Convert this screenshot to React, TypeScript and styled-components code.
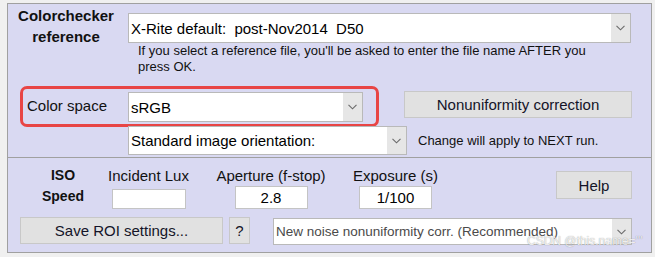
import React from 'react'
import styled, { createGlobalStyle } from 'styled-components'

const GlobalStyle = createGlobalStyle`
    html, body {
        margin: 0;
        background: #f0f0f0;
    }
    body {
        font-family: "Liberation Sans", Arial, sans-serif;
        color: #000;
    }
`

const Chevron = () => (
    <svg width="9" height="6" viewBox="0 0 9 6">
        <polyline points="0.5,0.8 4.5,4.8 8.5,0.8" fill="none" stroke="#6a6a6a" strokeWidth="1.1" />
    </svg>
)

const Dropdown = ({ text, width, height, $muted, $size }: { text: string; width: number; height: number; $muted?: boolean; $size?: number }) => (
    <SelectBox style={{ width, height }}>
        <SelectText $muted={$muted} $size={$size}>{text}</SelectText>
        <ArrowZone>
            <Chevron />
        </ArrowZone>
    </SelectBox>
)

const App = () => {
    return (
        <Window>
            <GlobalStyle />

            <Panel>
                <RefRow>
                    <BoldLabel $width={116} $size={15}>
                        Colorchecker<br />reference
                    </BoldLabel>
                    <RefColumn>
                        <Dropdown text="X-Rite default:  post-Nov2014  D50" width={503} height={30} />
                        <Note>
                            If you select a reference file, you'll be asked to enter the file name AFTER you<br />
                            press OK.
                        </Note>
                    </RefColumn>
                </RefRow>

                <SpaceRow>
                    <Highlight>
                        <PlainLabel>Color space</PlainLabel>
                        <Dropdown text="sRGB" width={235} height={30} />
                    </Highlight>
                    <Button $width={228} $height={27} $left={25} $top={5}>
                        Nonuniformity correction
                    </Button>
                </SpaceRow>

                <OrientRow>
                    <Dropdown text="Standard image orientation:" width={279} height={29} />
                    <Note $inline>Change will apply to NEXT run.</Note>
                </OrientRow>
            </Panel>

            <Panel $lower>
                <FieldRow>
                    <BoldLabel $width={64} $size={14} $left={23} $top={7}>
                        ISO<br />Speed
                    </BoldLabel>
                    <Field $width={81} $left={13}>
                        <FieldLabel>Incident Lux</FieldLabel>
                        <FieldInput readOnly defaultValue="" $width={74} $height={20} $top={5} />
                    </Field>
                    <Field $width={108} $left={28}>
                        <FieldLabel>Aperture (f-stop)</FieldLabel>
                        <FieldInput readOnly defaultValue="2.8" $width={73} $height={23} $top={2} />
                    </Field>
                    <Field $width={91} $left={25}>
                        <FieldLabel>Exposure (s)</FieldLabel>
                        <FieldInput readOnly defaultValue="1/100" $width={73} $height={23} $top={2} />
                    </Field>
                    <Button $width={76} $height={28} $top={13} $auto>
                        Help
                    </Button>
                </FieldRow>

                <ActionRow>
                    <Button $width={203} $height={27} $left={12}>
                        Save ROI settings...
                    </Button>
                    <Button $width={21} $height={27} $left={6}>
                        ?
                    </Button>
                    <NoiseSlot>
                        <Dropdown text="New noise nonuniformity corr. (Recommended)" width={359} height={27} $muted $size={13.5} />
                    </NoiseSlot>
                </ActionRow>
            </Panel>

            <Watermark>CSDN @this.name='''</Watermark>
        </Window>
    )
}

export default App

const Window = styled.div`
    position: relative;
    width: 655px;
    height: 257px;
    padding: 3px 0 0 7px;
    box-sizing: border-box;
    overflow: hidden;
`
const Panel = styled.section<{ $lower?: boolean }>`
    width: 645px;
    box-sizing: border-box;
    background: #d9d9f2;
    border: 1px solid #a0a0a0;
    border-top: ${p => (p.$lower ? 'none' : '1px solid #a0a0a0')};
    padding: ${p => (p.$lower ? '0 19px 7px 0' : '1px 0 2px 0')};
`
const RefRow = styled.div`
    display: flex;
    align-items: flex-start;
`
const BoldLabel = styled.div<{ $width: number; $size: number; $left?: number; $top?: number }>`
    width: ${p => p.$width}px;
    margin-left: ${p => p.$left ?? 0}px;
    margin-top: ${p => p.$top ?? 0}px;
    margin-right: ${p => (p.$left ? 0 : 4)}px;
    flex-shrink: 0;
    text-align: center;
    font-weight: bold;
    font-size: ${p => p.$size}px;
    line-height: 21px;
    color: #111;
`
const RefColumn = styled.div`
    display: flex;
    flex-direction: column;
    padding-top: 8px;
`
const SelectBox = styled.div`
    display: flex;
    align-items: stretch;
    box-sizing: border-box;
    background: #fff;
    border: 1px solid #b9b9b9;
    flex-shrink: 0;
`
const SelectText = styled.div<{ $muted?: boolean; $size?: number }>`
    flex: 1;
    display: flex;
    align-items: center;
    padding-left: 2px;
    font-size: ${p => p.$size ?? 15}px;
    color: ${p => (p.$muted ? '#4a4a4a' : '#000')};
    white-space: pre;
    overflow: hidden;
`
const ArrowZone = styled.div`
    width: 19px;
    background: #e6e6e6;
    display: flex;
    align-items: center;
    justify-content: center;
`
const Note = styled.div<{ $inline?: boolean }>`
    font-size: 13px;
    line-height: 16px;
    color: #111;
    padding-left: ${p => (p.$inline ? 0 : 10)}px;
    margin-left: ${p => (p.$inline ? 11 : 0)}px;
    align-self: ${p => (p.$inline ? 'center' : 'flex-start')};
    white-space: nowrap;
`
const SpaceRow = styled.div`
    display: flex;
    align-items: flex-start;
    margin-top: 11px;
`
const Highlight = styled.div`
    display: flex;
    align-items: flex-start;
    margin-left: 12px;
    padding: 3px 13px 2px 4px;
    border: 3px solid #e84545;
    border-radius: 7px;
`
const PlainLabel = styled.div`
    width: 101px;
    margin-top: 5px;
    font-size: 15px;
    line-height: 17px;
    color: #111;
`
const Button = styled.button<{ $width: number; $height: number; $left?: number; $top?: number; $auto?: boolean }>`
    width: ${p => p.$width}px;
    height: ${p => p.$height}px;
    margin: ${p => p.$top ?? 0}px 0 0 ${p => (p.$auto ? 'auto' : `${p.$left ?? 0}px`)};
    padding: 0;
    flex-shrink: 0;
    box-sizing: border-box;
    background: #e1e1e1;
    border: 1px solid #c8c8c8;
    border-radius: 0;
    font-family: inherit;
    font-size: 15px;
    color: #141428;
`
const OrientRow = styled.div`
    display: flex;
    align-items: center;
    margin-top: -1px;
    margin-left: 120px;
`
const FieldRow = styled.div`
    display: flex;
    align-items: flex-start;
`
const Field = styled.div<{ $width: number; $left: number }>`
    width: ${p => p.$width}px;
    margin-left: ${p => p.$left}px;
    margin-top: 9px;
    display: flex;
    flex-direction: column;
    align-items: center;
    flex-shrink: 0;
`
const FieldLabel = styled.div`
    font-size: 15px;
    line-height: 17px;
    white-space: nowrap;
    color: #111;
`
const FieldInput = styled.input<{ $width: number; $height: number; $top: number }>`
    width: ${p => p.$width}px;
    height: ${p => p.$height}px;
    margin-top: ${p => p.$top}px;
    box-sizing: border-box;
    padding: 0;
    border: 1px solid #c4c4c4;
    background: #fff;
    font-family: inherit;
    font-size: 15px;
    text-align: center;
    color: #000;
    outline: none;
`
const ActionRow = styled.div`
    display: flex;
    align-items: flex-start;
    margin-top: 8px;
`
const NoiseSlot = styled.div`
    margin-left: 23px;
    margin-top: 1px;
`
const Watermark = styled.div`
    position: absolute;
    left: 527px;
    top: 234px;
    font-size: 12px;
    line-height: 14px;
    color: rgba(255, 255, 255, 0.85);
    text-shadow: 0 0 1px rgba(0, 0, 0, 0.45);
    white-space: nowrap;
    pointer-events: none;
`
